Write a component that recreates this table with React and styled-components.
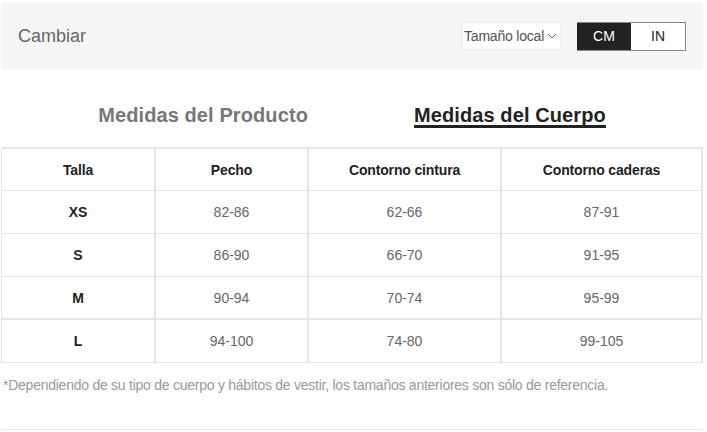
import React, { useState } from 'react';
import styled, { createGlobalStyle } from 'styled-components';

const rows = [
  { size: 'XS', chest: '82-86', waist: '62-66', hips: '87-91' },
  { size: 'S', chest: '86-90', waist: '66-70', hips: '91-95' },
  { size: 'M', chest: '90-94', waist: '70-74', hips: '95-99', thick: true },
  { size: 'L', chest: '94-100', waist: '74-80', hips: '99-105' },
];

function App() {
  const [unit, setUnit] = useState('CM');
  const [tab, setTab] = useState('body');

  return (
    <Page>
      <GlobalStyle />
      <Header>
        <Title>Cambiar</Title>
        <Controls>
          <Select>
            Tamaño local
            <svg width="10" height="6" viewBox="0 0 10 6">
              <path d="M1 1l4 4 4-4" fill="none" stroke="#666" strokeWidth="1" />
            </svg>
          </Select>
          <Toggle>
            <UnitButton $active={unit === 'CM'} onClick={() => setUnit('CM')}>
              CM
            </UnitButton>
            <UnitButton $active={unit === 'IN'} onClick={() => setUnit('IN')}>
              IN
            </UnitButton>
          </Toggle>
        </Controls>
      </Header>

      <Tabs>
        <Tab $active={tab === 'product'} onClick={() => setTab('product')}>
          Medidas del Producto
        </Tab>
        <Tab $active={tab === 'body'} onClick={() => setTab('body')}>
          Medidas del Cuerpo
        </Tab>
      </Tabs>

      <Table>
        <colgroup>
          <col style={{ width: 154 }} />
          <col style={{ width: 153 }} />
          <col style={{ width: 193 }} />
          <col />
        </colgroup>
        <thead>
          <tr>
            <Th>Talla</Th>
            <Th>Pecho</Th>
            <Th>Contorno cintura</Th>
            <Th>Contorno caderas</Th>
          </tr>
        </thead>
        <tbody>
          {rows.map((r) => (
            <tr key={r.size}>
              <Td $bold $thick={r.thick}>{r.size}</Td>
              <Td $thick={r.thick}>{r.chest}</Td>
              <Td $thick={r.thick}>{r.waist}</Td>
              <Td $thick={r.thick}>{r.hips}</Td>
            </tr>
          ))}
        </tbody>
      </Table>

      <Note>
        *Dependiendo de su tipo de cuerpo y hábitos de vestir, los tamaños anteriores son sólo de referencia.
      </Note>
      <Divider />
    </Page>
  );
}

const GlobalStyle = createGlobalStyle`
  body {
    margin: 0;
    background: #fff;
    font-family: "Liberation Sans", Arial, sans-serif;
  }
`;

const Page = styled.div`
  width: 702px;
  padding: 3px 0 0 1px;
`;

const Header = styled.div`
  height: 66px;
  background: #f5f5f5;
  display: flex;
  align-items: center;
  justify-content: space-between;
  padding: 0 17px 0 17px;
  box-sizing: border-box;
`;

const Title = styled.span`
  font-size: 18px;
  color: #666;
`;

const Controls = styled.div`
  display: flex;
  align-items: center;
  gap: 16px;
`;

const Select = styled.div`
  width: 99px;
  height: 28px;
  box-sizing: border-box;
  background: #fff;
  border: 1px solid #eee;
  display: flex;
  align-items: center;
  justify-content: space-between;
  padding: 0 3px 0 1px;
  font-size: 14px;
  color: #555;
  letter-spacing: -0.2px;
`;

const Toggle = styled.div`
  display: flex;
  height: 27px;
  border: 1px solid #888;
  border-left: none;
`;

const UnitButton = styled.button`
  width: 54px;
  height: 100%;
  border: none;
  padding: 0;
  font-family: inherit;
  font-size: 14px;
  cursor: pointer;
  background: ${(p) => (p.$active ? '#222' : '#fff')};
  color: ${(p) => (p.$active ? '#fff' : '#222')};
`;

const Tabs = styled.div`
  display: flex;
  justify-content: center;
  gap: 106px;
  padding: 36px 0 0;
  height: 42px;
  box-sizing: content-box;
`;

const Tab = styled.div`
  font-size: 20px;
  line-height: 20px;
  font-weight: bold;
  cursor: pointer;
  height: 20px;
  letter-spacing: 0.1px;
  color: ${(p) => (p.$active ? '#222' : '#777')};
  border-bottom: 3px solid ${(p) => (p.$active ? '#222' : 'transparent')};
`;

const Table = styled.table`
  width: 702px;
  border-collapse: separate;
  border-spacing: 0;
  table-layout: fixed;
  border-top: 2px solid #e6e6e6;
  border-left: 1px solid #e6e6e6;
`;

const Th = styled.th`
  height: 41px;
  padding: 0;
  font-size: 14px;
  font-weight: bold;
  color: #222;
  letter-spacing: -0.15px;
  border-right: 2px solid #e6e6e6;
  border-bottom: 1px solid #e6e6e6;
  text-align: center;
  vertical-align: middle;
  line-height: 38px;
`;

const Td = styled.td`
  height: ${(p) => (p.$thick ? '41px' : '42px')};
  padding: 0;
  font-size: 14px;
  text-align: center;
  line-height: 40px;
  font-weight: ${(p) => (p.$bold ? 'bold' : 'normal')};
  color: ${(p) => (p.$bold ? '#222' : '#666')};
  border-right: 2px solid #e6e6e6;
  border-bottom: ${(p) => (p.$thick ? '2px' : '1px')} solid #e6e6e6;
`;

const Note = styled.p`
  margin: 14px 0 0 2px;
  font-size: 14px;
  color: #999;
  letter-spacing: -0.25px;
`;

const Divider = styled.div`
  margin-top: 36px;
  height: 1px;
  background: #e6e6e6;
`;

export default App;
